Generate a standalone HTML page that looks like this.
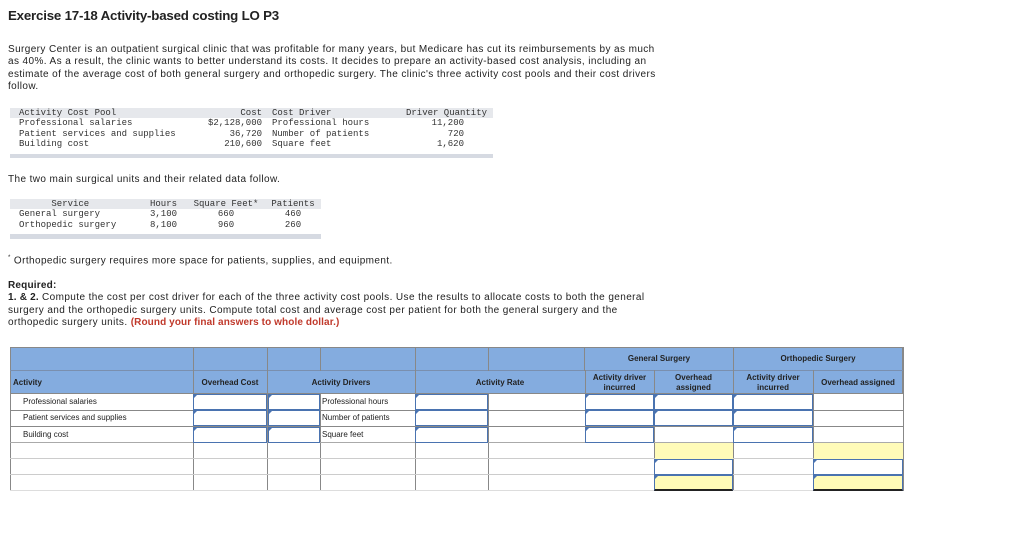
<!DOCTYPE html>
<html><head><meta charset="utf-8"><style>
*{margin:0;padding:0;box-sizing:border-box}
body{width:1024px;height:533px;background:#fff;font-family:"Liberation Sans",sans-serif;color:#222;position:relative;overflow:hidden}
.a{position:absolute;white-space:nowrap}
.p{font-size:10px;letter-spacing:0.4px}
.m{font-family:"Liberation Mono",monospace;font-size:9px;color:#333}
.i{position:absolute;border:1.5px solid #4a73b0;background:#fff}
.i:before{content:"";position:absolute;left:0;top:0;border-left:3px solid #4a73b0;border-bottom:3px solid transparent}
.h{font-weight:bold;font-size:8px;color:#222}
</style></head><body>
<div class="a" style="left:8px;top:8px;font-size:13.3px;font-weight:bold;letter-spacing:-0.2px">Exercise 17-18 Activity-based costing LO P3</div>
<div class="a p" style="left:8px;top:44px">Surgery Center is an outpatient surgical clinic that was profitable for many years, but Medicare has cut its reimbursements by as much</div>
<div class="a p" style="left:8px;top:56px">as 40%. As a result, the clinic wants to better understand its costs. It decides to prepare an activity-based cost analysis, including an</div>
<div class="a p" style="left:8px;top:69px">estimate of the average cost of both general surgery and orthopedic surgery. The clinic's three activity cost pools and their cost drivers</div>
<div class="a p" style="left:8px;top:81px">follow.</div>

<div class="a" style="left:10px;top:108px;width:483px;height:10px;background:#e6e8ec"></div>
<div class="a" style="left:10px;top:154px;width:483px;height:4px;background:#d6dae2"></div>
<div class="a m" style="left:19px;top:108px;line-height:10.3px">Activity Cost Pool<br>Professional salaries<br>Patient services and supplies<br>Building cost</div>
<div class="a m" style="left:190px;top:108px;line-height:10.3px;text-align:right;width:72px">Cost<br>$2,128,000<br>36,720<br>210,600</div>
<div class="a m" style="left:272px;top:108px;line-height:10.3px">Cost Driver<br>Professional hours<br>Number of patients<br>Square feet</div>
<div class="a m" style="left:406px;top:108px;line-height:10.3px">Driver Quantity</div>
<div class="a m" style="left:406px;top:118.3px;line-height:10.3px;text-align:right;width:58px">11,200<br>720<br>1,620</div>

<div class="a p" style="left:8px;top:174px">The two main surgical units and their related data follow.</div>

<div class="a" style="left:10px;top:199px;width:311px;height:10px;background:#e6e8ec"></div>
<div class="a" style="left:10px;top:234px;width:311px;height:5px;background:#d6dae2"></div>
<div class="a m" style="left:19px;top:199px;line-height:10.3px">&nbsp;&nbsp;&nbsp;&nbsp;&nbsp;&nbsp;Service<br>General surgery<br>Orthopedic surgery</div>
<div class="a m" style="left:150px;top:199px;line-height:10.3px">Hours<br>3,100<br>8,100</div>
<div class="a m" style="left:188px;top:199px;line-height:10.3px;text-align:center;width:76px">Square Feet*<br>660<br>960</div>
<div class="a m" style="left:266px;top:199px;line-height:10.3px;text-align:center;width:54px">Patients<br>460<br>260</div>

<div class="a p" style="left:8px;top:255px"><sup style="font-size:6px">*</sup> Orthopedic surgery requires more space for patients, supplies, and equipment.</div>
<div class="a p" style="left:8px;top:280px;font-weight:bold;letter-spacing:0.2px">Required:</div>
<div class="a p" style="left:8px;top:292px"><b style="letter-spacing:0.2px">1. &amp; 2.</b> Compute the cost per cost driver for each of the three activity cost pools. Use the results to allocate costs to both the general</div>
<div class="a p" style="left:8px;top:305px">surgery and the orthopedic surgery units. Compute total cost and average cost per patient for both the general surgery and the</div>
<div class="a p" style="left:8px;top:317px">orthopedic surgery units. <b style="color:#c0392b;letter-spacing:0.1px">(Round your final answers to whole dollar.)</b></div>

<div class="a" style="left:10px;top:347px;width:893px;height:47px;background:#84acdf;border:1px solid #888"></div>
<div class="a" style="left:10px;top:370px;width:893px;height:1px;background:#7a8fae"></div>
<div class="a" style="left:193px;top:347px;width:1px;height:144px;background:#888"></div>
<div class="a" style="left:267px;top:347px;width:1px;height:144px;background:#888"></div>
<div class="a" style="left:320px;top:347px;width:1px;height:24px;background:#888"></div>
<div class="a" style="left:320px;top:394px;width:1px;height:97px;background:#888"></div>
<div class="a" style="left:415px;top:347px;width:1px;height:144px;background:#888"></div>
<div class="a" style="left:488px;top:347px;width:1px;height:24px;background:#888"></div>
<div class="a" style="left:488px;top:394px;width:1px;height:97px;background:#888"></div>
<div class="a" style="left:585px;top:370px;width:1px;height:73px;background:#888"></div>
<div class="a" style="left:584px;top:347px;width:1px;height:24px;background:#888"></div>
<div class="a" style="left:654px;top:370px;width:1px;height:121px;background:#888"></div>
<div class="a" style="left:733px;top:347px;width:1px;height:144px;background:#888"></div>
<div class="a" style="left:813px;top:370px;width:1px;height:121px;background:#888"></div>
<div class="a" style="left:903px;top:347px;width:1px;height:144px;background:#888"></div>
<div class="a" style="left:10px;top:394px;width:1px;height:97px;background:#888"></div>
<div class="a" style="left:10px;top:410px;width:893px;height:1px;background:#888"></div>
<div class="a" style="left:10px;top:426px;width:893px;height:1px;background:#888"></div>
<div class="a" style="left:10px;top:442px;width:893px;height:1px;background:#aaa"></div>
<div class="a" style="left:10px;top:458px;width:893px;height:1px;background:#ccc"></div>
<div class="a" style="left:10px;top:474px;width:893px;height:1px;background:#ccc"></div>
<div class="a" style="left:10px;top:490px;width:893px;height:1px;background:#ddd"></div>

<div class="a h" style="left:585px;top:354px;width:148px;text-align:center">General Surgery</div>
<div class="a h" style="left:733px;top:354px;width:170px;text-align:center">Orthopedic Surgery</div>
<div class="a h" style="left:13px;top:378px">Activity</div>
<div class="a h" style="left:193px;top:378px;width:74px;text-align:center">Overhead Cost</div>
<div class="a h" style="left:267px;top:378px;width:148px;text-align:center">Activity Drivers</div>
<div class="a h" style="left:415px;top:378px;width:170px;text-align:center">Activity Rate</div>
<div class="a h" style="left:585px;top:373px;width:69px;text-align:center;line-height:9.5px">Activity driver<br>incurred</div>
<div class="a h" style="left:654px;top:373px;width:79px;text-align:center;line-height:9.5px">Overhead<br>assigned</div>
<div class="a h" style="left:733px;top:373px;width:80px;text-align:center;line-height:9.5px">Activity driver<br>incurred</div>
<div class="a h" style="left:813px;top:378px;width:90px;text-align:center">Overhead assigned</div>

<div class="a" style="left:23px;top:397px;font-size:8px">Professional salaries</div>
<div class="a" style="left:23px;top:413px;font-size:8px">Patient services and supplies</div>
<div class="a" style="left:23px;top:430px;font-size:8px">Building cost</div>
<div class="a" style="left:322px;top:397px;font-size:8px">Professional hours</div>
<div class="a" style="left:322px;top:413px;font-size:8px">Number of patients</div>
<div class="a" style="left:322px;top:430px;font-size:8px">Square feet</div>

<div class="i" style="left:193px;top:394px;width:74px;height:16px"></div>
<div class="i" style="left:193px;top:410px;width:74px;height:16px"></div>
<div class="i" style="left:193px;top:427px;width:74px;height:16px"></div>
<div class="i" style="left:268px;top:394px;width:52px;height:16px"></div>
<div class="i" style="left:268px;top:410px;width:52px;height:16px"></div>
<div class="i" style="left:268px;top:427px;width:52px;height:16px"></div>
<div class="i" style="left:415px;top:394px;width:73px;height:16px"></div>
<div class="i" style="left:415px;top:410px;width:73px;height:16px"></div>
<div class="i" style="left:415px;top:427px;width:73px;height:16px"></div>
<div class="i" style="left:585px;top:394px;width:69px;height:16px"></div>
<div class="i" style="left:585px;top:410px;width:69px;height:16px"></div>
<div class="i" style="left:585px;top:427px;width:69px;height:16px"></div>
<div class="i" style="left:654px;top:394px;width:79px;height:16px"></div>
<div class="i" style="left:654px;top:410px;width:79px;height:16px"></div>
<div class="i" style="left:733px;top:394px;width:80px;height:16px"></div>
<div class="i" style="left:733px;top:410px;width:80px;height:16px"></div>
<div class="i" style="left:733px;top:427px;width:80px;height:16px"></div>
<div class="a" style="left:655px;top:443px;width:78px;height:16px;background:#fffbb8"></div>
<div class="a" style="left:814px;top:443px;width:89px;height:16px;background:#fffbb8"></div>
<div class="i" style="left:654px;top:459px;width:79px;height:16px"></div>
<div class="i" style="left:813px;top:459px;width:90px;height:16px"></div>
<div class="i" style="left:654px;top:475px;width:79px;height:16px;background:#fffbb8;border-bottom:2px solid #222"></div>
<div class="i" style="left:813px;top:475px;width:90px;height:16px;background:#fffbb8;border-bottom:2px solid #222"></div>
</body></html>
